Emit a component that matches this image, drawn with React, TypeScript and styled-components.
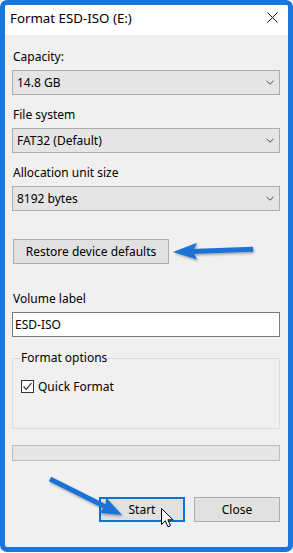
import React from "react";
import styled, { createGlobalStyle } from "styled-components";

const Global = createGlobalStyle`
  html, body { margin: 0; padding: 0; background: #ffffff; }
  * { box-sizing: border-box; }
  body { font-family: "Noto Sans", "Open Sans", sans-serif; font-size: 12px; color: #000; }
`;

const Page = styled.div`
  position: relative;
  width: 293px;
  height: 553px;
  background: #ffffff;
`;

const Frame = styled.div`
  width: 293px;
  height: 552px;
  border: 5px solid #1b76dc;
  border-radius: 7px;
  overflow: hidden;
  display: flex;
  flex-direction: column;
  background: #f0f0f0;
`;

const TitleBar = styled.div`
  height: 30px;
  flex: none;
  background: #ffffff;
  display: flex;
  align-items: flex-start;
  justify-content: space-between;
  padding: 4px 10px 0 5px;
`;

const Title = styled.div`
  font-size: 13.3px;
  line-height: 18px;
  color: #000;
`;

const CloseX = styled.svg`
  margin-top: 3px;
  width: 11px;
  height: 11px;
`;

const Content = styled.div`
  flex: 1;
  display: flex;
  flex-direction: column;
  padding: 14px 8px 0 7px;
`;

const Field = styled.div<{ $gap?: number }>`
  display: flex;
  flex-direction: column;
  margin-bottom: ${(p) => p.$gap ?? 12}px;
`;

const Label = styled.div`
  line-height: 16px;
  margin-bottom: 5px;
  padding-left: 1px;
`;

const Select = styled.div`
  height: 25px;
  border: 1px solid #adadad;
  background: #e5e5e5;
  display: flex;
  align-items: center;
  justify-content: space-between;
  padding: 0 5px 0 4px;
  line-height: 16px;
`;

const Chevron = styled.svg`
  width: 8px;
  height: 5px;
`;

const Button = styled.div<{ $width: number; $primary?: boolean }>`
  width: ${(p) => p.$width}px;
  height: 25px;
  border: ${(p) => (p.$primary ? "2px solid #0a74d8" : "1px solid #adadad")};
  background: #e1e1e1;
  display: flex;
  align-items: center;
  justify-content: center;
  line-height: 16px;
`;

const RestoreWrap = styled.div`
  margin: 28px 0 27px 1px;
`;

const TextInput = styled.div`
  height: 25px;
  border: 1px solid #7a7a7a;
  background: #ffffff;
  display: flex;
  align-items: center;
  padding-left: 2px;
  line-height: 16px;
`;

const Group = styled.fieldset`
  margin: 13px 0 0 0;
  padding: 12px 7px 34px 7px;
  border: 1px solid #dcdcdc;
  min-width: 0;
`;

const Legend = styled.legend`
  padding: 0 1px;
  line-height: 16px;
`;

const CheckRow = styled.div`
  display: flex;
  align-items: center;
  height: 16px;
  gap: 4px;
  padding-left: 1px;
`;

const CheckBox = styled.div`
  width: 13px;
  height: 13px;
  border: 1px solid #333333;
  background: #ffffff;
  display: flex;
  align-items: center;
  justify-content: center;
`;

const Progress = styled.div`
  margin-top: 16px;
  height: 16px;
  border: 1px solid #bcbcbc;
  background: #e6e6e6;
`;

const ButtonRow = styled.div`
  margin-top: 36px;
  display: flex;
  justify-content: flex-end;
  gap: 9px;
`;

const Overlay = styled.svg`
  position: absolute;
  left: 0;
  top: 0;
  width: 293px;
  height: 553px;
  pointer-events: none;
`;

const ChevronIcon = () => (
  <Chevron viewBox="0 0 8 5">
    <polyline points="0.5,0.8 4,4.2 7.5,0.8" fill="none" stroke="#4a4a4a" strokeWidth="1" />
  </Chevron>
);

const DropField = ({ label, value, gap }: { label: string; value: string; gap?: number }) => (
  <Field $gap={gap}>
    <Label>{label}</Label>
    <Select>
      <span>{value}</span>
      <ChevronIcon />
    </Select>
  </Field>
);

export default function App() {
  return (
    <Page>
      <Global />
      <Frame>
        <TitleBar>
          <Title>Format ESD-ISO (E:)</Title>
          <CloseX viewBox="0 0 11 11">
            <line x1="0.5" y1="0.5" x2="10.5" y2="10.5" stroke="#111" strokeWidth="1" />
            <line x1="10.5" y1="0.5" x2="0.5" y2="10.5" stroke="#111" strokeWidth="1" />
          </CloseX>
        </TitleBar>
        <Content>
          <DropField label="Capacity:" value="14.8 GB" />
          <DropField label="File system" value="FAT32 (Default)" />
          <DropField label="Allocation unit size" value="8192 bytes" gap={0} />
          <RestoreWrap>
            <Button $width={156}>Restore device defaults</Button>
          </RestoreWrap>
          <Field $gap={0}>
            <Label>Volume label</Label>
            <TextInput>ESD-ISO</TextInput>
          </Field>
          <Group>
            <Legend>Format options</Legend>
            <CheckRow>
              <CheckBox>
                <svg width="11" height="11" viewBox="0 0 11 11">
                  <polyline points="1.5,5.5 4.2,8.3 9.5,2.2" fill="none" stroke="#333" strokeWidth="1.2" />
                </svg>
              </CheckBox>
              <span>Quick Format</span>
            </CheckRow>
          </Group>
          <Progress />
          <ButtonRow>
            <Button $width={86} $primary>Start</Button>
            <Button $width={86}>Close</Button>
          </ButtonRow>
        </Content>
      </Frame>
      <Overlay viewBox="0 0 293 553">
        <defs>
          <filter id="sh" x="-20%" y="-40%" width="140%" height="180%">
            <feDropShadow dx="1" dy="1.5" stdDeviation="1" floodColor="#000" floodOpacity="0.35" />
          </filter>
        </defs>
        <g filter="url(#sh)" fill="#1c72d6" stroke="none">
          <polygon points="191,249 253,246.8 253,251.8 191,254" />
          <polygon points="173,252 197,242.8 193,251.3 197,259.5" />
          <polygon points="48.9,481.2 51.1,476.8 106.5,504.5 104.3,508.9" />
          <polygon points="122,515 106.1,497.6 105.4,506.3 98.5,512.8" />
        </g>
        <g transform="translate(161.5,508.5)">
          <polygon
            points="0,0 0,16 3.8,12.3 6.5,18.3 9,17.2 6.4,11.3 11.5,11.3"
            fill="#ffffff"
            stroke="#000000"
            strokeWidth="1"
            strokeLinejoin="round"
          />
        </g>
      </Overlay>
    </Page>
  );
}
